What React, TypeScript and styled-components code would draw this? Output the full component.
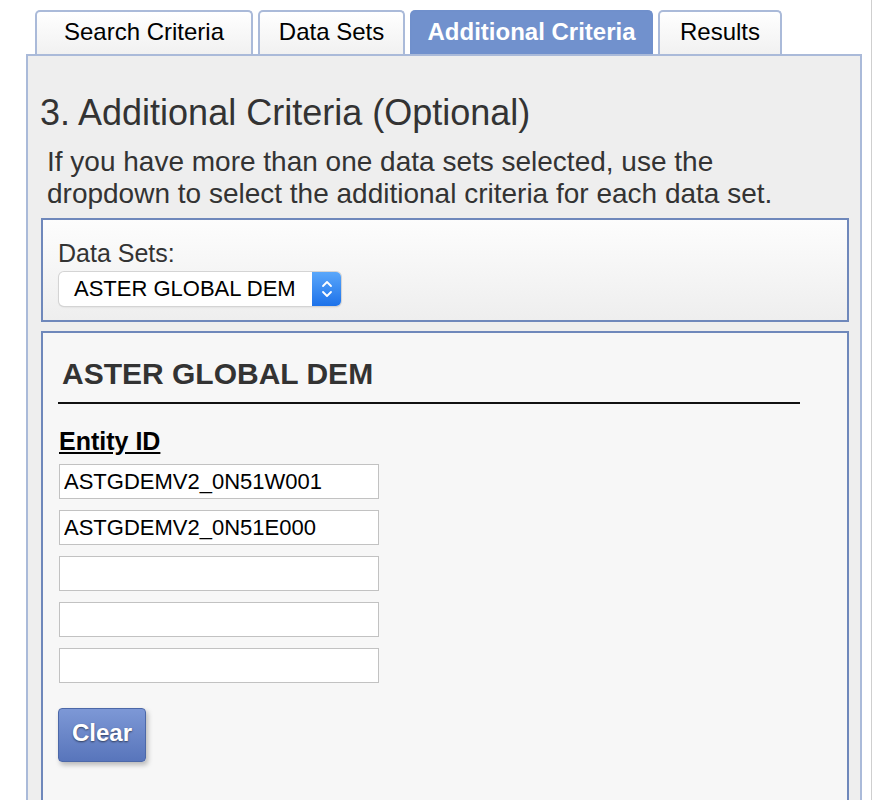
import React from "react";
import styled, { createGlobalStyle } from "styled-components";

const Global = createGlobalStyle`
  html, body { margin: 0; padding: 0; background: #ffffff; }
  body { font-family: "Liberation Sans", Arial, Helvetica, sans-serif; overflow: hidden; }
`;

const Page = styled.div`
  width: 872px;
  height: 800px;
  border-right: 1px solid #cfcfcf;
  box-sizing: border-box;
  overflow: hidden;
`;

const Frame = styled.div`
  margin-left: 26px;
  width: 836px;
  padding-top: 10px;
`;

const TabBar = styled.div`
  display: flex;
  gap: 5px;
  margin-left: 9px;
  height: 44px;
`;

const Tab = styled.div<{ $w: number; $active?: boolean }>`
  width: ${(p) => p.$w}px;
  box-sizing: border-box;
  height: 44px;
  border: 2px solid ${(p) => (p.$active ? "#7090cc" : "#aabad9")};
  border-bottom: none;
  border-radius: 5px 5px 0 0;
  background: ${(p) =>
    p.$active ? "#7191cd" : "linear-gradient(#ffffff, #f1f1f1)"};
  color: ${(p) => (p.$active ? "#ffffff" : "#000000")};
  font-weight: ${(p) => (p.$active ? 700 : 400)};
  font-size: 24px;
  display: flex;
  align-items: center;
  justify-content: center;
  padding-bottom: 3px;
`;

const Panel = styled.div`
  border: 2px solid #aabad9;
  background: #eeeeee;
  height: 760px;
  box-sizing: border-box;
  padding: 0 11px 0 13px;
`;

const Title = styled.h1`
  margin: 36px 0 0 -1px;
  font-size: 36px;
  line-height: 42px;
  font-weight: 400;
  color: #333333;
`;

const Intro = styled.p`
  margin: 12px 20px 0 6px;
  font-size: 28px;
  line-height: 32px;
  color: #333333;
`;

const Box = styled.div<{ $grad?: boolean }>`
  border: 2px solid #6f88bb;
  background: ${(p) => (p.$grad ? "linear-gradient(#fdfdfd, #eeeeee)" : "#f7f7f7")};
`;

const SelectBox = styled(Box)`
  margin-top: 8px;
  padding: 19px 15px 14px 15px;
`;

const Label = styled.div`
  font-size: 25px;
  line-height: 29px;
  color: #333333;
  margin-bottom: 4px;
`;

const Select = styled.div`
  margin-left: 1px;
  width: 282px;
  height: 34px;
  box-sizing: border-box;
  border-radius: 5px;
  background: #ffffff;
  box-shadow: 0 0 0 1px #d4d4d4, 0 1px 2px rgba(0, 0, 0, 0.15);
  display: flex;
  align-items: center;
  overflow: hidden;
`;

const SelectText = styled.span`
  flex: 1;
  font-size: 22px;
  color: #000;
  padding-left: 15px;
`;

const SelectArrow = styled.span`
  width: 29px;
  height: 34px;
  background: linear-gradient(#5aa7fb, #1d72ea);
  display: flex;
  align-items: center;
  justify-content: center;
`;

const DetailBox = styled(Box)`
  margin-top: 9px;
  padding: 23px 47px 40px 15px;
  min-height: 600px;
`;

const DataSetTitle = styled.h2`
  margin: 0 0 0 4px;
  font-size: 30px;
  line-height: 35px;
  font-weight: 700;
  color: #333333;
`;

const Rule = styled.hr`
  margin: 11px 0 0 0;
  border: none;
  height: 2px;
  background: #111111;
`;

const FieldLabel = styled.div`
  margin-top: 23px;
  font-size: 25px;
  line-height: 29px;
  font-weight: 700;
  color: #000;
  text-decoration: underline;
  padding-left: 1px;
`;

const Inputs = styled.div`
  margin-top: 8px;
  display: flex;
  flex-direction: column;
  gap: 11px;
  padding-left: 1px;
`;

const Input = styled.input`
  width: 320px;
  height: 35px;
  box-sizing: border-box;
  border: 1px solid #c2c2c2;
  background: #ffffff;
  font-family: "Liberation Sans", Arial, sans-serif;
  font-size: 22px;
  color: #000;
  padding: 0 0 0 4px;
  margin: 0;
  outline: none;
`;

const ClearButton = styled.button`
  margin-top: 25px;
  width: 88px;
  height: 54px;
  border: 1px solid #4c68a8;
  border-radius: 4px;
  background: linear-gradient(#7d98d6, #5875bb);
  color: #ffffff;
  font-family: "Liberation Sans", Arial, sans-serif;
  font-weight: 700;
  font-size: 24px;
  text-shadow: 0 1px 2px rgba(0, 0, 0, 0.55);
  box-shadow: 2px 3px 5px rgba(0, 0, 0, 0.25);
  padding: 0 0 4px 0;
  cursor: pointer;
`;

const tabs = [
  { label: "Search Criteria", w: 218 },
  { label: "Data Sets", w: 147 },
  { label: "Additional Criteria", w: 243, active: true },
  { label: "Results", w: 124 },
];

const ids = ["ASTGDEMV2_0N51W001", "ASTGDEMV2_0N51E000", "", "", ""];

export default function App() {
  return (
    <Page>
      <Global />
      <Frame>
        <TabBar>
          {tabs.map((t) => (
            <Tab key={t.label} $w={t.w} $active={t.active}>
              {t.label}
            </Tab>
          ))}
        </TabBar>
        <Panel>
          <Title>3. Additional Criteria (Optional)</Title>
          <Intro>
            If you have more than one data sets selected, use the dropdown to
            select the additional criteria for each data set.
          </Intro>
          <SelectBox $grad>
            <Label>Data Sets:</Label>
            <Select>
              <SelectText>ASTER GLOBAL DEM</SelectText>
              <SelectArrow>
                <svg width="12" height="20" viewBox="0 0 12 20">
                  <path d="M2 7 L6 3 L10 7 M2 13 L6 17 L10 13" fill="none" stroke="#fff" strokeWidth="1.8" strokeLinecap="round" strokeLinejoin="round" />
                </svg>
              </SelectArrow>
            </Select>
          </SelectBox>
          <DetailBox>
            <DataSetTitle>ASTER GLOBAL DEM</DataSetTitle>
            <Rule />
            <FieldLabel>Entity ID</FieldLabel>
            <Inputs>
              {ids.map((v, i) => (
                <Input key={i} defaultValue={v} />
              ))}
            </Inputs>
            <ClearButton>Clear</ClearButton>
          </DetailBox>
        </Panel>
      </Frame>
    </Page>
  );
}
